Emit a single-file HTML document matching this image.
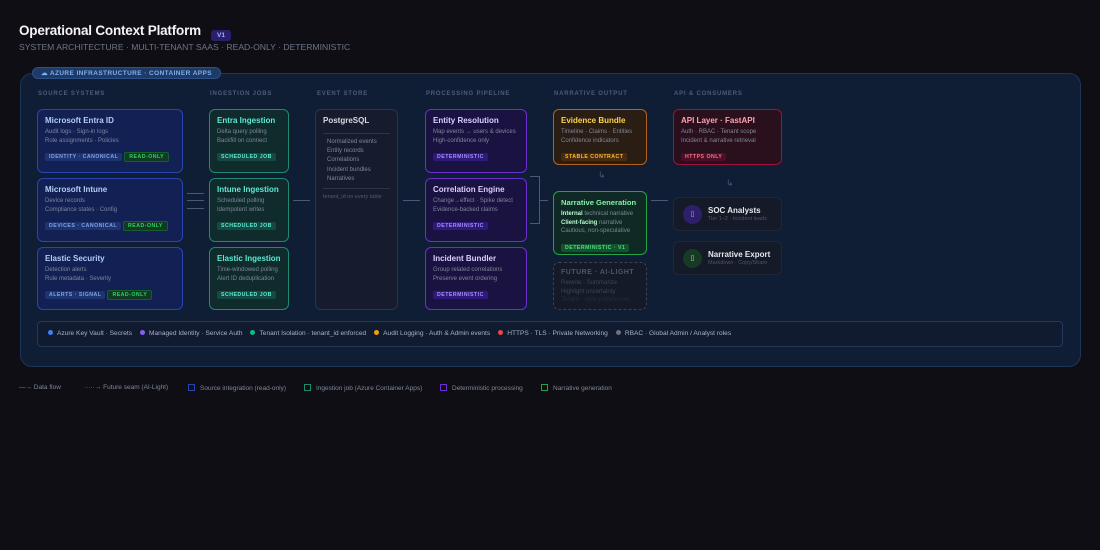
<!DOCTYPE html>
<html><head><meta charset="utf-8"><style>
*{box-sizing:border-box;margin:0;padding:0}
body{width:1100px;height:550px;background:#0f0e15;font-family:"Liberation Sans",sans-serif;position:relative;overflow:hidden;color:#cbd5e1}
.a{position:absolute}
h1{position:absolute;left:19px;top:23px;font-size:13.5px;font-weight:bold;color:#f3f4f6;letter-spacing:-0.2px;white-space:nowrap}
.v1{position:absolute;left:211px;top:30px;width:20px;height:11px;background:#2a1f6b;color:#a5b4fc;font-size:6.5px;font-weight:bold;border-radius:3px;text-align:center;line-height:11px}
.sub{position:absolute;left:19px;top:42px;font-size:8.6px;color:#6b7588;white-space:nowrap}
.wrap{position:absolute;left:20px;top:73px;width:1061px;height:294px;background:#0f1e35;border:1px solid #1f3658;border-radius:12px}
.tag{position:absolute;left:32px;top:67px;height:12px;padding:0 8px;background:#1e3a66;border:1px solid #2d5089;border-radius:6px;color:#7fb0ef;font-size:6.5px;font-weight:bold;line-height:11px;letter-spacing:0.4px}
.col{position:absolute;top:91px;font-size:6px;font-weight:bold;color:#4d5d76;letter-spacing:0.8px}
.box{position:absolute;border-radius:6px;border:1.5px solid;padding:6px 7px;white-space:nowrap}
.box b{display:block;font-size:8px;margin-bottom:3px}
.box p{font-size:6px;color:#7d8799;line-height:8.6px}
.pill{display:inline-block;font-size:5.2px;font-weight:bold;letter-spacing:0.5px;padding:1px 4px;border-radius:2px;margin-top:4px;margin-right:2px;white-space:nowrap}
.src{border-color:#2746b4;background:#122054}.src b{color:#b4cdf4}
.src .pill.c{background:#1d3470;color:#7ea3e6}.pill.r{background:#0f3a24;color:#34d160;border:1px solid #1a5c30}
.ing{border-color:#1f8a6e;background:#0f2b2c}.ing b{color:#5eead4}.ing .pill{background:#144a42;color:#5eead4}
.proc{border-color:#6b2fd0;background:#1a1240}.proc b{color:#dccfff}.proc .pill{background:#2e1a7a;color:#a78bfa}
.dot{display:inline-block;width:5px;height:5px;border-radius:50%;margin:0 4px 0 8px;vertical-align:0}
.leg{position:absolute;top:384px;font-size:6.5px;color:#7d8799;white-space:nowrap}
.sq{display:inline-block;width:7px;height:7px;border:1px solid;vertical-align:-1px;margin-right:5px}
.arr{position:absolute;height:1px;background:#4a5a74}
</style></head><body>
<h1>Operational Context Platform</h1><div class="v1">V1</div>
<div class="sub">SYSTEM ARCHITECTURE · MULTI-TENANT SAAS · READ-ONLY · DETERMINISTIC</div>
<div class="wrap"></div>
<div class="tag">☁ AZURE INFRASTRUCTURE · CONTAINER APPS</div>
<div class="col" style="left:38px">SOURCE SYSTEMS</div>
<div class="col" style="left:210px">INGESTION JOBS</div>
<div class="col" style="left:317px">EVENT STORE</div>
<div class="col" style="left:426px">PROCESSING PIPELINE</div>
<div class="col" style="left:554px">NARRATIVE OUTPUT</div>
<div class="col" style="left:674px">API &amp; CONSUMERS</div>

<div class="box src" style="left:37px;top:109px;width:146px;height:64px"><b>Microsoft Entra ID</b><p>Audit logs · Sign-in logs<br>Role assignments · Policies</p><span class="pill c">IDENTITY · CANONICAL</span><span class="pill r">READ-ONLY</span></div>
<div class="box src" style="left:37px;top:178px;width:146px;height:64px"><b>Microsoft Intune</b><p>Device records<br>Compliance states · Config</p><span class="pill c">DEVICES · CANONICAL</span><span class="pill r">READ-ONLY</span></div>
<div class="box src" style="left:37px;top:247px;width:146px;height:63px"><b>Elastic Security</b><p>Detection alerts<br>Rule metadata · Severity</p><span class="pill c">ALERTS · SIGNAL</span><span class="pill r">READ-ONLY</span></div>

<div class="arr" style="left:187px;top:193px;width:17px"></div><div class="arr" style="left:187px;top:200px;width:17px"></div><div class="arr" style="left:187px;top:208px;width:17px"></div>

<div class="box ing" style="left:209px;top:109px;width:80px;height:64px"><b>Entra Ingestion</b><p>Delta query polling<br>Backfill on connect</p><span class="pill">SCHEDULED JOB</span></div>
<div class="box ing" style="left:209px;top:178px;width:80px;height:64px"><b>Intune Ingestion</b><p>Scheduled polling<br>Idempotent writes</p><span class="pill">SCHEDULED JOB</span></div>
<div class="box ing" style="left:209px;top:247px;width:80px;height:63px"><b>Elastic Ingestion</b><p>Time-windowed polling<br>Alert ID deduplication</p><span class="pill">SCHEDULED JOB</span></div>

<div class="arr" style="left:293px;top:200px;width:17px"></div>

<div class="box" style="left:315px;top:109px;width:83px;height:201px;border-color:#2b3448;background:#161c2d;border-width:1px"><b style="color:#d5dae3">PostgreSQL</b><div style="border-top:1px solid #2b3448;margin:8px 0 4px"></div><p style="line-height:9.2px;padding-left:4px">Normalized events<br>Entity records<br>Correlations<br>Incident bundles<br>Narratives</p><div style="border-top:1px solid #2b3448;margin:4px 0"></div><p style="font-size:5.5px;color:#4d5d76">tenant_id on every table</p></div>

<div class="arr" style="left:403px;top:200px;width:17px"></div>

<div class="box proc" style="left:425px;top:109px;width:102px;height:64px"><b>Entity Resolution</b><p>Map events → users &amp; devices<br>High-confidence only</p><span class="pill">DETERMINISTIC</span></div>
<div class="box proc" style="left:425px;top:178px;width:102px;height:64px"><b>Correlation Engine</b><p>Change→effect · Spike detect<br>Evidence-backed claims</p><span class="pill">DETERMINISTIC</span></div>
<div class="box proc" style="left:425px;top:247px;width:102px;height:63px"><b>Incident Bundler</b><p>Group related correlations<br>Preserve event ordering</p><span class="pill">DETERMINISTIC</span></div>

<div class="a" style="left:530px;top:176px;width:10px;height:48px;border:1px solid #4a5a74;border-left:none"></div>
<div class="arr" style="left:540px;top:200px;width:8px"></div>

<div class="box" style="left:553px;top:109px;width:94px;height:56px;border-color:#b9611b;background:#2a1d14"><b style="color:#fcd34d">Evidence Bundle</b><p>Timeline · Claims · Entities<br>Confidence indicators</p><span class="pill" style="background:#4a2a10;color:#fbbf24">STABLE CONTRACT</span></div>
<div class="a" style="left:598px;top:170px;color:#4a5a74;font-size:9px">↳</div>
<div class="box" style="left:553px;top:191px;width:94px;height:64px;border-color:#22a34a;background:#0f2a24;padding-top:6px"><b style="color:#86efac;font-size:7.6px">Narrative Generation</b><p style="line-height:8.5px"><span style="color:#bbf7d0;font-weight:bold">Internal</span> technical narrative<br><span style="color:#bbf7d0;font-weight:bold">Client-facing</span> narrative<br>Cautious, non-speculative</p><span class="pill" style="background:#14532d;color:#4ade80;margin-top:3px">DETERMINISTIC · V1</span></div>
<div class="box" style="left:553px;top:262px;width:94px;height:48px;border:1px dashed #3a4254;background:#141a28"><b style="color:#4d5668;font-size:7px;letter-spacing:0.5px">FUTURE · AI-LIGHT</b><p style="color:#3c4556">Rewrite · Summarize<br>Highlight uncertainty<br><span style="color:#242c3c">Tenant · style preferences</span></p></div>

<div class="arr" style="left:651px;top:200px;width:17px"></div>

<div class="box" style="left:673px;top:109px;width:109px;height:56px;border-color:#9f1239;background:#2a0f1d"><b style="color:#fda4af">API Layer · FastAPI</b><p>Auth · RBAC · Tenant scope<br>Incident &amp; narrative retrieval</p><span class="pill" style="background:#4c0f25;color:#fb7185">HTTPS ONLY</span></div>
<div class="a" style="left:726px;top:178px;color:#4a5a74;font-size:9px">↳</div>
<div class="box" style="left:673px;top:197px;width:109px;height:34px;border:1px solid #1f2737;background:#141a28;padding:6px"><div style="position:absolute;left:9px;top:7px;width:19px;height:19px;border-radius:50%;background:#2e1f6b;color:#a5b4fc;font-size:7px;text-align:center;line-height:19px">▯</div><div style="position:absolute;left:34px;top:8px;font-size:8px;font-weight:bold;color:#e5e7eb">SOC Analysts</div><div style="position:absolute;left:34px;top:18px;font-size:5.5px;color:#4d5668">Tier 1–2 · Incident leads</div></div>
<div class="box" style="left:673px;top:241px;width:109px;height:34px;border:1px solid #1f2737;background:#141a28"><div style="position:absolute;left:9px;top:7px;width:19px;height:19px;border-radius:50%;background:#163a24;color:#86efac;font-size:7px;text-align:center;line-height:19px">▯</div><div style="position:absolute;left:34px;top:8px;font-size:8px;font-weight:bold;color:#e5e7eb">Narrative Export</div><div style="position:absolute;left:34px;top:18px;font-size:5.5px;color:#4d5668">Markdown · Copy/Share</div></div>

<div class="a" style="left:37px;top:321px;width:1026px;height:26px;border:1px solid #24375a;background:#101b30;border-radius:4px;font-size:6.6px;color:#a8b2c4;line-height:24px;padding-left:2px;white-space:nowrap">
<span class="dot" style="background:#3b82f6"></span>Azure Key Vault · Secrets<span class="dot" style="background:#8b5cf6"></span>Managed Identity · Service Auth<span class="dot" style="background:#10b981"></span>Tenant Isolation · tenant_id enforced<span class="dot" style="background:#f59e0b"></span>Audit Logging · Auth &amp; Admin events<span class="dot" style="background:#ef4444"></span>HTTPS · TLS · Private Networking<span class="dot" style="background:#6b7280"></span>RBAC · Global Admin / Analyst roles</div>

<div class="leg" style="left:19px">—→ Data flow</div>
<div class="leg" style="left:84px">·····→ Future seam (AI-Light)</div>
<div class="leg" style="left:188px"><span class="sq" style="border-color:#2746b4"></span>Source integration (read-only)</div>
<div class="leg" style="left:304px"><span class="sq" style="border-color:#1f8a6e"></span>Ingestion job (Azure Container Apps)</div>
<div class="leg" style="left:440px"><span class="sq" style="border-color:#6b2fd0"></span>Deterministic processing</div>
<div class="leg" style="left:541px"><span class="sq" style="border-color:#22a34a"></span>Narrative generation</div>
</body></html>
